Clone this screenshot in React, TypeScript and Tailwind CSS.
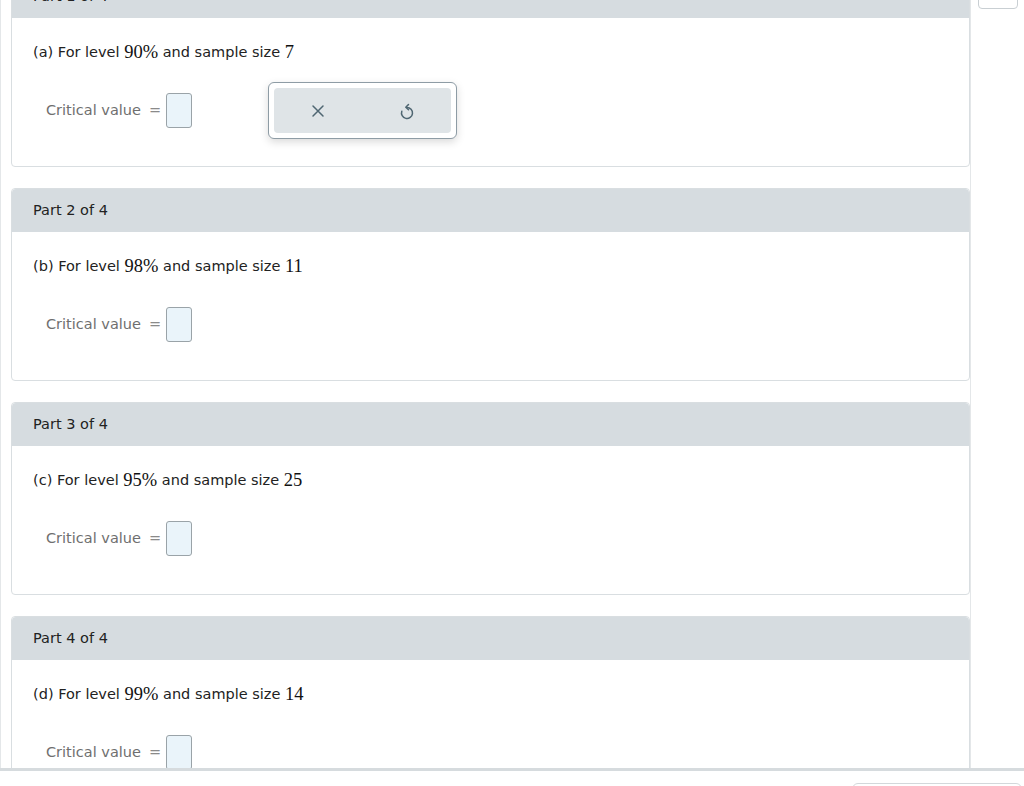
import type { ReactNode } from "react";

const parts = [
  { label: "a", level: "90%", size: "7" },
  { label: "b", level: "98%", size: "11" },
  { label: "c", level: "95%", size: "25" },
  { label: "d", level: "99%", size: "14" },
];

function Num({ children }: { children: ReactNode }) {
  return (
    <span className="font-['Liberation_Serif','Times_New_Roman',serif] text-[18.5px] text-[#111]">
      {children}
    </span>
  );
}

function Toolbar() {
  return (
    <div className="absolute left-[256px] top-[64px] w-[189px] h-[57px] rounded-[6px] border border-[#8e9ca5] bg-white p-[5px] shadow-[0_3px_8px_rgba(0,0,0,0.15)]">
      <div className="flex h-full items-center rounded-[4px] bg-[#dfe4e7]">
        <div className="flex w-1/2 justify-center">
          <svg width="14" height="14" viewBox="0 0 14 14" fill="none" stroke="#4f6672" strokeWidth="1.5" strokeLinecap="round">
            <path d="M2 2 L12 12 M12 2 L2 12" />
          </svg>
        </div>
        <div className="flex w-1/2 justify-center">
          <svg width="16" height="18" viewBox="0 0 16 18" fill="none" stroke="#4f6672" strokeWidth="1.5" strokeLinecap="round" strokeLinejoin="round">
            <path d="M8 5.5 A5.5 5.5 0 1 1 2.8 9.2" />
            <path d="M9.5 2.5 L6.8 5.3 L9.5 7.8" />
          </svg>
        </div>
      </div>
    </div>
  );
}

function Card({ idx }: { idx: number }) {
  const p = parts[idx];
  return (
    <div className={`rounded-[4px] border border-[#d9dee1] bg-white ${idx === 0 ? "mt-[-26px]" : "mt-[21px]"}`}>
      <div className="flex h-[43px] items-center rounded-t-[4px] bg-[#d6dce0] pl-[21px] text-[#222]">
        Part {idx + 1} of 4
      </div>
      <div className="relative h-[148px] pl-[21px]">
        <div className="flex h-[70px] items-center text-[#222]">
          ({p.label})&nbsp;For level&nbsp;<Num>{p.level}</Num>&nbsp;and sample size&nbsp;<Num>{p.size}</Num>
        </div>
        <div className="mt-[5px] flex items-center pl-[13px] text-[#6f6f6f]">
          <span>Critical value</span>
          <span className="ml-[8px] mr-[5px] text-[#8a8a8a]">=</span>
          <span className="h-[35px] w-[26px] rounded-[3px] border border-[#9aa3a8] bg-[#eaf4fa]" />
        </div>
        {idx === 0 && <Toolbar />}
      </div>
    </div>
  );
}

export default function App() {
  return (
    <div className="relative h-[786px] w-[1024px] overflow-hidden bg-white font-['DejaVu_Sans','Verdana',sans-serif] text-[14.5px]">
      <div className="flex h-[768px] overflow-hidden">
        <div className="w-[971px] overflow-hidden border-l border-r border-[#e4e7e9] pl-[10px]">
          {parts.map((_, i) => (
            <Card key={i} idx={i} />
          ))}
        </div>
        <div className="flex-1 pl-[7px]">
          <div className="mt-[-6px] h-[15px] w-[40px] rounded-[4px] border border-[#c9cfd3]" />
        </div>
      </div>
      <div className="h-[3px] bg-[#d6dbde]" />
      <div className="flex justify-end pr-[2px] pt-[12px]">
        <div className="h-[30px] w-[170px] rounded-[6px] border border-[#d3d8db]" />
      </div>
    </div>
  );
}
